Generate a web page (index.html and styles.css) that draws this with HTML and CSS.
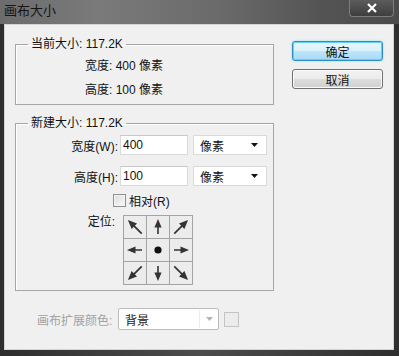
FILE: index.html
```html
<!DOCTYPE html>
<html lang="zh-CN">
  <head>
    <meta charset="UTF-8" />
    <meta name="viewport" content="width=device-width, initial-scale=1.0" />
    <title>画布大小</title>
    <link rel="stylesheet" href="styles.css">
  </head>
  <body>
    <svg class="defs" width="0" height="0">
      <symbol id="arrow" viewBox="0 0 22 22">
        <path d="M11 18V8" stroke="#333" stroke-width="1.6" fill="none" />
        <path d="M11 3l-3.6 8.5h7.2z" fill="#333" />
      </symbol>
      <symbol id="arrow-d" viewBox="0 0 22 22">
        <path d="M11 20.5V7" stroke="#333" stroke-width="1.7" fill="none" />
        <path d="M11 1l-3.8 9h7.6z" fill="#333" />
      </symbol>
    </svg>

    <div class="window">
      <div class="titlebar">
        <span class="title">画布大小</span>
        <div class="close">
          <svg width="12" height="10" viewBox="0 0 12 10">
            <path d="M2 1l8 8M10 1l-8 8" stroke="#fff" stroke-width="2.2" />
          </svg>
        </div>
      </div>

      <div class="client">
        <div class="main">
          <fieldset class="group current">
            <legend>当前大小: 117.2K</legend>
            <div class="info">
              <div class="info-row">宽度: 400 像素</div>
              <div class="info-row">高度: 100 像素</div>
            </div>
          </fieldset>

          <fieldset class="group new-size">
            <legend>新建大小: 117.2K</legend>
            <div class="field-row">
              <span class="field-label">宽度(W):</span>
              <div class="input">400</div>
              <div class="select">像素
                <svg class="caret" width="7" height="4" viewBox="0 0 7 4"><path d="M0 0h7L3.5 4z" fill="#111" /></svg>
              </div>
            </div>
            <div class="field-row second">
              <span class="field-label">高度(H):</span>
              <div class="input">100</div>
              <div class="select">像素
                <svg class="caret" width="7" height="4" viewBox="0 0 7 4"><path d="M0 0h7L3.5 4z" fill="#111" /></svg>
              </div>
            </div>
            <div class="check-row">
              <span class="checkbox"></span>
              <span>相对(R)</span>
            </div>
            <div class="anchor-row">
              <span class="field-label anchor-label">定位:</span>
              <div class="anchor-grid">
                <div class="cell"><svg width="22" height="22" viewBox="0 0 22 22"><use href="#arrow-d" transform="rotate(-45 11 11)" /></svg></div>
                <div class="cell"><svg width="22" height="22" viewBox="0 0 22 22"><use href="#arrow" /></svg></div>
                <div class="cell"><svg width="22" height="22" viewBox="0 0 22 22"><use href="#arrow-d" transform="rotate(45 11 11)" /></svg></div>
                <div class="cell"><svg width="22" height="22" viewBox="0 0 22 22"><use href="#arrow" transform="rotate(-90 11 11)" /></svg></div>
                <div class="cell"><svg width="22" height="22" viewBox="0 0 22 22"><circle cx="11" cy="11" r="3.6" fill="#111" /></svg></div>
                <div class="cell"><svg width="22" height="22" viewBox="0 0 22 22"><use href="#arrow" transform="rotate(90 11 11)" /></svg></div>
                <div class="cell"><svg width="22" height="22" viewBox="0 0 22 22"><use href="#arrow-d" transform="rotate(-135 11 11)" /></svg></div>
                <div class="cell"><svg width="22" height="22" viewBox="0 0 22 22"><use href="#arrow" transform="rotate(180 11 11)" /></svg></div>
                <div class="cell"><svg width="22" height="22" viewBox="0 0 22 22"><use href="#arrow-d" transform="rotate(135 11 11)" /></svg></div>
              </div>
            </div>
          </fieldset>

          <div class="ext-row">
            <span class="ext-label">画布扩展颜色:</span>
            <div class="ext-select">
              <span class="ext-value">背景</span>
              <span class="ext-btn">
                <svg width="7" height="4" viewBox="0 0 7 4"><path d="M0 0h7L3.5 4z" fill="#b4b4b4" /></svg>
              </span>
            </div>
            <span class="swatch"></span>
          </div>
        </div>

        <div class="buttons">
          <button class="btn default">确定</button>
          <button class="btn">取消</button>
        </div>
      </div>
    </div>
  </body>
</html>
```

FILE: styles.css
```css
body {
  margin: 0;
  width: 399px;
  height: 356px;
  overflow: hidden;
  font-family: "Liberation Sans", "Noto Sans CJK SC", sans-serif;
  font-size: 12px;
  color: #111;
  background-color: #333;
}

.defs {
  position: absolute;
}

.window {
  width: 399px;
  height: 356px;
  display: flex;
  flex-direction: column;
  background: linear-gradient(90deg, #2e2e2e, #4c4c4c 50%, #2e2e2e);
}

.titlebar {
  height: 24px;
  display: flex;
  justify-content: space-between;
  align-items: flex-start;
  padding-left: 4px;
  background: linear-gradient(90deg, #6c6c6c, #7a7a7a 25%, #6a6a6a 55%, #545454 80%, #4a4a4a);
}

.title {
  padding-top: 3px;
  line-height: 16px;
  font-size: 13px;
  color: #151515;
}

.close {
  width: 45px;
  height: 17px;
  margin-right: 5px;
  box-sizing: border-box;
  border: 1px solid #7c7c7c;
  border-top: none;
  border-radius: 0 0 4px 4px;
  background: linear-gradient(#5c5c5c, #3e3e3e);
  display: flex;
  align-items: center;
  justify-content: center;
}

.client {
  height: 326px;
  margin: 0 5px 0 4px;
  box-sizing: border-box;
  display: flex;
  background-color: #f0f0f0;
  border: 1px solid #d4d4d4;
}

.main {
  width: 259px;
  padding-left: 10px;
}

/* group boxes */
.group {
  margin: 12px 0 0 0;
  padding: 0;
  min-width: 0;
  border: 1px solid #a6a6a6;
  box-shadow: inset 1px 1px 0 #fff;
}

.group legend {
  margin-left: 12px;
  padding: 0 3px;
  line-height: 14px;
}

.info {
  padding: 3px 0 2px 69px;
}

.info-row {
  line-height: 24px;
}

.new-size {
  margin-top: 11px;
  padding-bottom: 5px;
}

.field-row {
  display: flex;
  align-items: center;
  margin-top: 5px;
  height: 20px;
}

.field-row.second {
  margin-top: 11px;
}

.field-label {
  width: 104px;
  box-sizing: border-box;
  padding-right: 2px;
  text-align: right;
}

.input {
  width: 68px;
  height: 20px;
  box-sizing: border-box;
  padding-left: 2px;
  line-height: 18px;
  background-color: #fff;
  border: 1px solid #dadada;
  border-top-color: #c8c8c8;
}

.select {
  width: 74px;
  height: 20px;
  margin-left: 5px;
  box-sizing: border-box;
  padding: 0 8px 0 6px;
  display: flex;
  align-items: center;
  justify-content: space-between;
  background-color: #fff;
  border: 1px solid #dadada;
}

.check-row {
  display: flex;
  align-items: center;
  gap: 3px;
  height: 20px;
  margin-top: 4px;
  padding-left: 97px;
}

.checkbox {
  width: 13px;
  height: 13px;
  box-sizing: border-box;
  border: 1px solid #8f8f8f;
  background: linear-gradient(135deg, #dcdcdc, #fafafa);
  box-shadow: inset 0 0 0 1px #f4f4f4;
}

.anchor-row {
  display: flex;
  align-items: flex-start;
  margin-top: 5px;
}

.anchor-label {
  padding-right: 5px;
  line-height: 14px;
}

.anchor-grid {
  margin-left: 3px;
  display: grid;
  grid-template-columns: repeat(3, 22px);
  gap: 1px;
  padding: 1px;
  background-color: #a3a3a3;
}

.cell {
  width: 22px;
  height: 22px;
  background-color: #ececec;
}

.cell svg {
  display: block;
}

/* bottom row */
.ext-row {
  display: flex;
  align-items: center;
  margin-top: 17px;
  padding-left: 22px;
}

.ext-label {
  color: #a2a2a2;
  width: 81px;
}

.ext-select {
  width: 101px;
  height: 22px;
  box-sizing: border-box;
  display: flex;
  align-items: center;
  background-color: #fff;
  border: 1px solid #bdbdbd;
  border-radius: 2px;
}

.ext-value {
  flex: 1;
  padding-left: 6px;
  color: #222;
}

.ext-btn {
  width: 18px;
  height: 18px;
  display: flex;
  align-items: center;
  justify-content: center;
  border-left: 1px solid #ececec;
}

.swatch {
  width: 15px;
  height: 15px;
  margin-left: 5px;
  box-sizing: border-box;
  border: 1px solid #c4c4c4;
  background-color: #ececec;
}

/* buttons */
.buttons {
  margin-left: auto;
  padding: 16px 10px 0 0;
  display: flex;
  flex-direction: column;
  gap: 8px;
}

.btn {
  width: 91px;
  height: 20px;
  padding: 0;
  font-family: "Liberation Sans", "Noto Sans CJK SC", sans-serif;
  font-size: 12px;
  color: #111;
  border: 1px solid #707070;
  border-radius: 3px;
  background: linear-gradient(#f2f2f2, #ebebeb 50%, #dddddd 50%, #cfcfcf);
  box-shadow: inset 0 0 0 1px #fbfbfb;
}

.btn.default {
  border-color: #2d8fbd;
  background: linear-gradient(#eaf6fd, #d9f0fc 50%, #bee6fd 50%, #a7d9f5);
  box-shadow: inset 0 0 0 1px #63d2f4, 0 0 2px #6cd6ff;
}
```
